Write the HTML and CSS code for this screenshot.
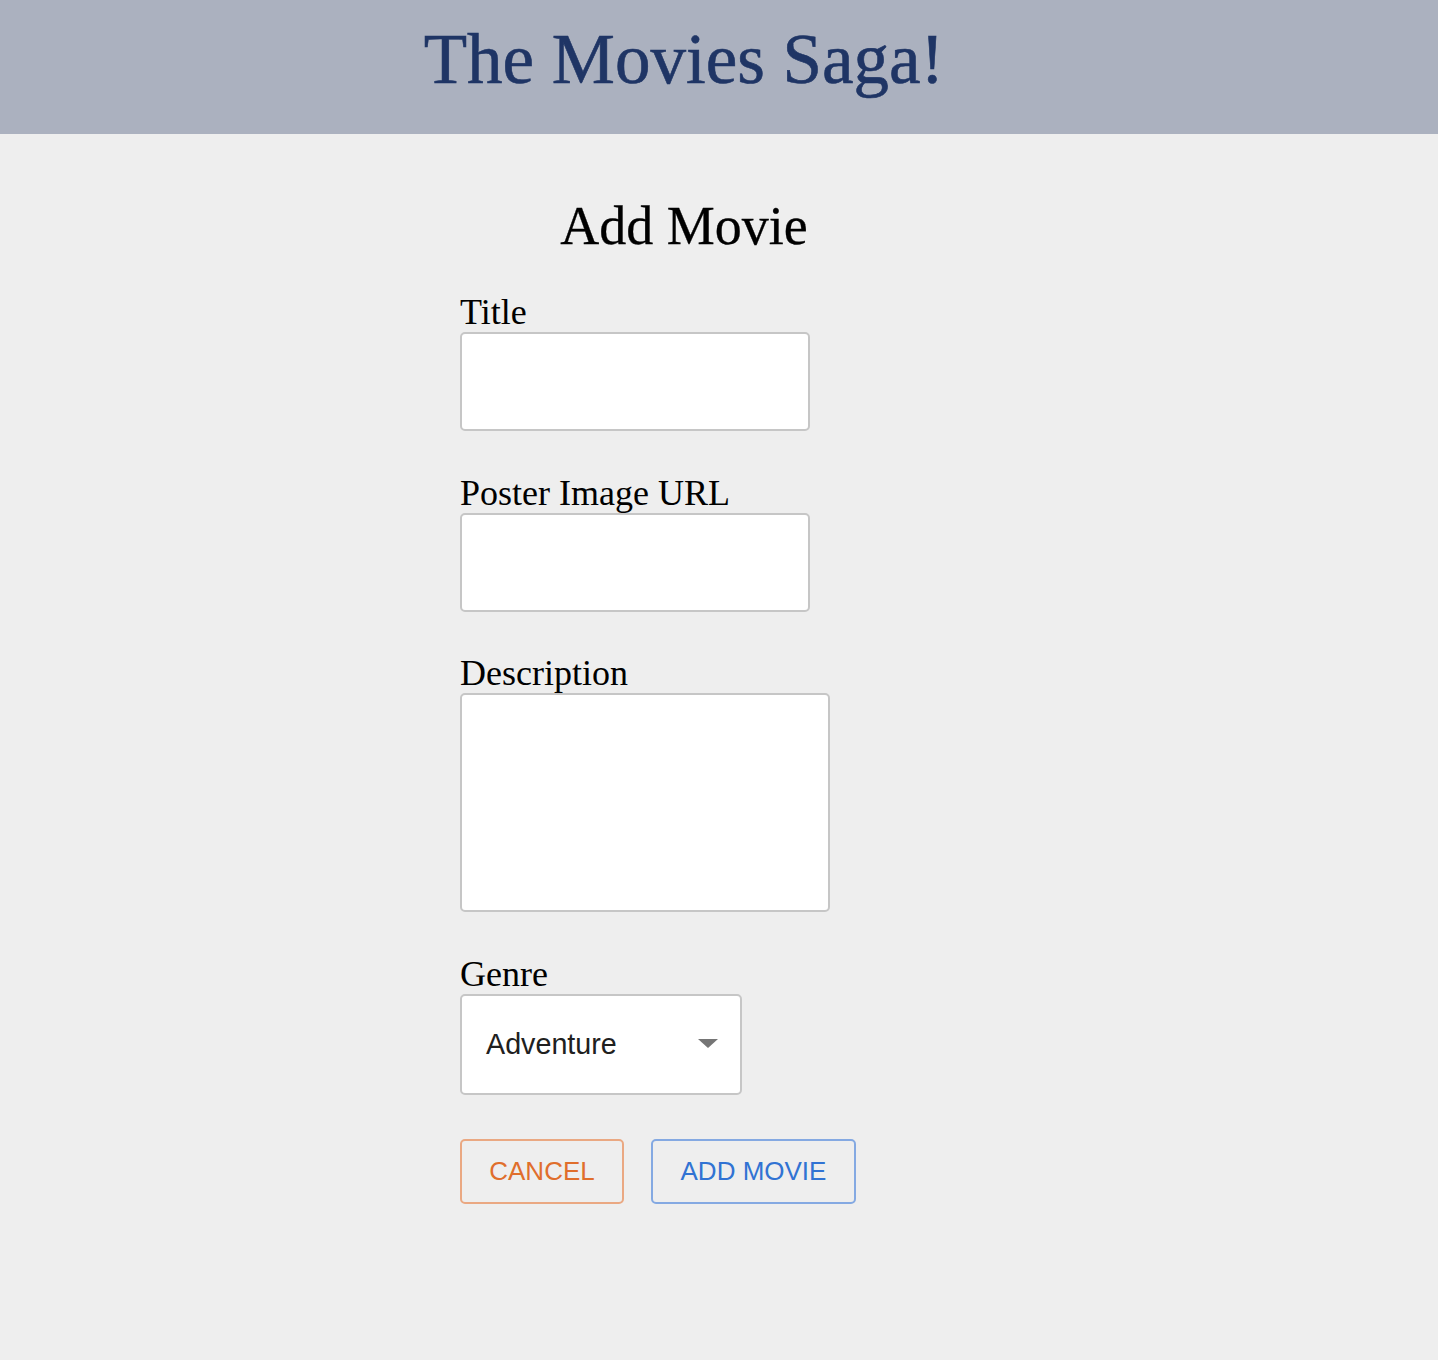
FILE: index.html
```html
<!DOCTYPE html>
<html>
<head>
<meta charset="utf-8">
<link rel="stylesheet" href="styles.css">
<title>The Movies Saga!</title>
</head>
<body>
<header class="top">
  <h1 class="brand">The Movies Saga!</h1>
</header>
<main class="page">
  <form class="form">
    <h2 class="heading">Add Movie</h2>
    <div class="field">
      <label class="label">Title</label>
      <input class="input" type="text">
    </div>
    <div class="field">
      <label class="label">Poster Image URL</label>
      <input class="input" type="text">
    </div>
    <div class="field">
      <label class="label">Description</label>
      <textarea class="textarea"></textarea>
    </div>
    <div class="field">
      <label class="label">Genre</label>
      <div class="select">
        <span class="select-text">Adventure</span>
        <svg class="caret" width="20" height="10" viewBox="0 0 20 10"><path d="M0 0 L20 0 L10 9 Z" fill="#757575"/></svg>
      </div>
    </div>
    <div class="actions">
      <button type="button" class="btn btn-cancel">CANCEL</button>
      <button type="button" class="btn btn-add">ADD MOVIE</button>
    </div>
  </form>
</main>
</body>
</html>
```
FILE: styles.css
```css
html, body {
  margin: 0;
  padding: 0;
}
body {
  background: #eeeeee;
  font-family: "Liberation Serif", "Times New Roman", serif;
  color: #000;
  min-height: 1360px;
}
.top {
  background: #abb1bf;
  height: 134px;
  box-sizing: border-box;
  display: flex;
  align-items: center;
  justify-content: center;
  padding: 0 70px 16px 0;
}
.brand {
  margin: 0;
  font-size: 71px;
  font-weight: normal;
  color: #1f3565;
  line-height: 1;
  -webkit-text-stroke: 0.6px #1f3565;
}
.page {
  display: flex;
  justify-content: center;
  padding-right: 70px;
}
.form {
  width: 448px;
  display: flex;
  flex-direction: column;
  padding-top: 62px;
}
.heading {
  margin: 0 0 38px;
  text-align: center;
  font-weight: normal;
  font-size: 54px;
  line-height: 60px;
  -webkit-text-stroke: 0.3px #000;
}
.field {
  display: flex;
  flex-direction: column;
  align-items: flex-start;
  margin-bottom: 43.5px;
}
.label {
  font-size: 36px;
  line-height: 36px;
  margin-bottom: 2px;
}
.input, .textarea, .select {
  box-sizing: border-box;
  background: #fff;
  border: 2px solid #c6c6c6;
  border-radius: 5px;
  margin: 0;
}
.input {
  width: 350px;
  height: 99px;
}
.textarea {
  width: 370px;
  height: 219px;
  resize: none;
}
.select {
  width: 282px;
  height: 101px;
  display: flex;
  align-items: center;
  justify-content: space-between;
  padding: 0 22px 0 24px;
}
.select-text {
  font-family: "Liberation Sans", Arial, sans-serif;
  font-size: 28.7px;
  color: #202020;
}
.caret {
  display: block;
}
.actions {
  display: flex;
  gap: 27px;
  margin-top: 1px;
}
.btn {
  box-sizing: border-box;
  height: 65px;
  background: transparent;
  border-radius: 5px;
  font-family: "Liberation Sans", Arial, sans-serif;
  font-size: 26px;
  padding: 0;
  cursor: pointer;
}
.btn-cancel {
  width: 164px;
  color: #e06e2c;
  border: 2px solid #eaa882;
}
.btn-add {
  width: 205px;
  color: #3173d3;
  border: 2px solid #84a9e2;
}
```
